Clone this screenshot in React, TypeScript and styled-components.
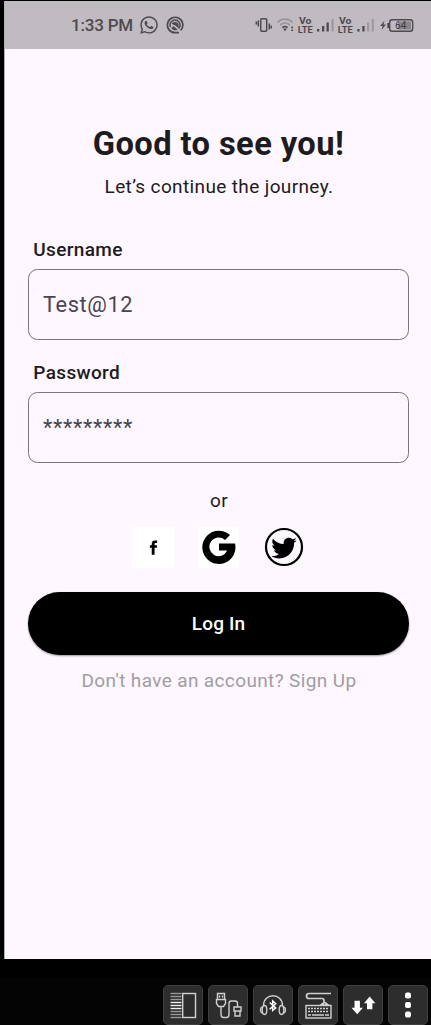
import React from "react";
import styled, { createGlobalStyle } from "styled-components";
import { FaWhatsapp, FaTwitter } from "react-icons/fa";

const GlobalStyle = createGlobalStyle`
  * { box-sizing: border-box; }
  body { margin: 0; background: #000; font-family: Roboto, sans-serif; }
`;

const Frame = styled.div`
  width: 431px;
  height: 1025px;
  display: flex;
  flex-direction: column;
  background: #000;
  overflow: hidden;
`;

const Screen = styled.main`
  margin: 1px 0 0 4px;
  height: 958px;
  background: #fef7ff;
  border-left: 1px solid #b3afb4;
  display: flex;
  flex-direction: column;
`;

const StatusBar = styled.header`
  height: 47.5px;
  flex: none;
  background: #c0bbc1;
  color: #4d4a4f;
  display: flex;
  align-items: center;
  padding: 0 17px 0 66px;
`;

const Clock = styled.span`
  font-size: 17px;
  line-height: 20px;
  font-weight: 500;
  width: 68px;
  letter-spacing: -0.2px;
  white-space: nowrap;
`;

const StatusIcons = styled.div`
  display: flex;
  align-items: center;
  gap: 7px;
`;

const SystemIcons = styled.svg`
  margin-left: auto;
  display: block;
`;

const Content = styled.section`
  display: flex;
  flex-direction: column;
  padding: 75.5px 22px 0 23px;
`;

const Title = styled.h1`
  margin: 0;
  font-size: 32.7px;
  line-height: 40px;
  font-weight: 700;
  letter-spacing: 0.4px;
  text-align: center;
  color: #1d1b20;
`;

const Subtitle = styled.p`
  margin: 11px 0 0;
  padding-left: 1px;
  font-size: 19px;
  line-height: 24px;
  letter-spacing: 0.37px;
  text-align: center;
  color: #1d1b20;
`;

const Field = styled.div<{ $top: number }>`
  margin-top: ${(p) => p.$top}px;
  display: flex;
  flex-direction: column;
`;

const Label = styled.label`
  padding-left: 5.3px;
  font-size: 19px;
  line-height: 22px;
  font-weight: 500;
  letter-spacing: 0.35px;
  color: #1d1b20;
`;

const InputBox = styled.div`
  margin-top: 8px;
  height: 71px;
  border: 1px solid #79747e;
  border-radius: 9.5px;
  display: flex;
  align-items: center;
  padding: 0 14px;
  font-size: 21.8px;
  line-height: 30px;
  letter-spacing: 0.6px;
  color: #49454f;
`;

const Or = styled.p`
  margin: 26px 0 0;
  padding-left: 1px;
  font-size: 19px;
  line-height: 24px;
  letter-spacing: 0.35px;
  text-align: center;
  color: #1d1b20;
`;

const Socials = styled.div`
  margin-top: 13.5px;
  display: flex;
  justify-content: center;
  gap: 24px;
`;

const Tile = styled.button<{ $bg: string }>`
  width: 41.5px;
  height: 41px;
  padding: 0;
  border: 0;
  color: #000;
  background: ${(p) => p.$bg};
  display: flex;
  align-items: center;
  justify-content: center;
`;

const LoginButton = styled.button`
  margin-top: 24.5px;
  height: 63px;
  border: 0;
  border-radius: 32px;
  background: #000;
  color: #fff;
  font-family: inherit;
  font-size: 19px;
  font-weight: 500;
  letter-spacing: 0.15px;
  box-shadow: 0 1px 2px rgba(0, 0, 0, 0.4);
`;

const SignUp = styled.p`
  margin: 14px 0 0;
  padding-left: 1px;
  font-size: 19px;
  line-height: 24px;
  letter-spacing: 0.37px;
  text-align: center;
  color: #a19da3;
`;

const Dock = styled.footer`
  margin-top: 19px;
  flex: 1;
  background: #040404;
  display: flex;
  justify-content: flex-end;
  gap: 5px;
  padding: 7px 3px 0 0;
`;

const DockButton = styled.button`
  width: 40px;
  height: 40px;
  padding: 0;
  border: 1px solid #3f3f3f;
  border-radius: 5px;
  background: #2d2d2d;
  display: flex;
  align-items: center;
  justify-content: center;
`;

const DockIcon = ({ children }: { children: React.ReactNode }) => (
  <svg width="38" height="38" viewBox="0 0 38 38" fill="none" stroke="#d0d0d0" strokeWidth="1.4">
    {children}
  </svg>
);

const stripes = [7.5, 10.5, 13.5, 16.5, 19.5, 22.5, 25.5, 28.5, 31.5];

export default function App() {
  return (
    <>
      <GlobalStyle />
      <Frame>
        <Screen>
          <StatusBar>
            <Clock>1:33 PM</Clock>
            <StatusIcons>
              <FaWhatsapp size={20} />
              <svg width="18" height="18" viewBox="0 0 18 18" fill="none" stroke="currentColor">
                <path d="M14.6 14.4A7.7 7.7 0 1 0 9 16.7H13" strokeWidth="1.7" />
                <path d="M4.5 11A4.9 4.9 0 1 1 12.6 12.4" strokeWidth="1.5" />
                <path d="M5.5 7.8c2-2.6 6-2.4 7.2 1l-.2 3.4-3.2-2.8z" fill="currentColor" stroke="none" />
                <path d="M5.2 11.8l2.6-1.6 3.8 3.6c-2.4 1.2-5 .4-6.4-2z" fill="currentColor" stroke="none" />
              </svg>
            </StatusIcons>
            <SystemIcons width="160" height="20" viewBox="254 15 160 20" fill="none">
              <g stroke="#4d4a4f" strokeWidth="1.5">
                <rect x="260.7" y="18.7" width="6" height="12.6" rx="1" />
                <path d="M258.3 20.5v6M256.3 21.5v3M269.3 23.5v6M271.2 25.5v3" />
              </g>
              <g strokeWidth="1.6">
                <path d="M277.5 22.3c4.5-4.2 10.5-4.2 15 0" stroke="#98949a" />
                <path d="M280 25.2c3-2.9 7-2.9 10 0" stroke="#98949a" />
                <path d="M282.4 27.7c1.6-1.5 3.6-1.5 5.2 0" stroke="#4d4a4f" />
              </g>
              <path d="M283 28.5h4l-2 2.7zM291.3 26.6h1.7v1.6h-1.7zM291.3 29.5h1.7v1.6h-1.7z" fill="#4d4a4f" />
              {[298, 338].map((x) => (
                <g key={x} fill="#4d4a4f" fontFamily="Roboto, sans-serif" fontWeight="700" textAnchor="middle">
                  <text x={x + 7.2} y="23.7" fontSize="9" textLength="12.5" lengthAdjust="spacingAndGlyphs">Vo</text>
                  <text x={x + 7.2} y="32.7" fontSize="9" textLength="15" lengthAdjust="spacingAndGlyphs">LTE</text>
                </g>
              ))}
              <path d="M317 29h2.3v2.5H317zM322 26h2.3v5.5H322zM326.5 22.5h2.3v9h-2.3zM357.3 29h2.3v2.5h-2.3zM362.3 26h2.3v5.5h-2.3z" fill="#4d4a4f" />
              <path d="M331.5 19h2.2v12.5h-2.2zM367 22.5h2.2v9H367zM371.7 19h2.2v12.5h-2.2z" fill="#9d999f" />
              <path d="M384.5 20.5l-4.3 5.5h2.5l-1.2 4 4.5-5.5h-2.5z" fill="#4d4a4f" />
              <path d="M387.3 23h1.7v5h-1.7z" fill="#4d4a4f" />
              <rect x="389.7" y="19.7" width="23" height="11.6" rx="2.5" stroke="#4d4a4f" strokeWidth="1.4" />
              <path d="M398 21.5h13v8h-13z" fill="#89858b" />
              <text x="400.7" y="29.1" textAnchor="middle" fontFamily="Roboto, sans-serif" fontSize="10" fill="#3f3c41">64</text>
            </SystemIcons>
          </StatusBar>
          <Content>
            <Title>Good to see you!</Title>
            <Subtitle>Let’s continue the journey.</Subtitle>
            <Field $top={40}>
              <Label>Username</Label>
              <InputBox>Test@12</InputBox>
            </Field>
            <Field $top={22}>
              <Label>Password</Label>
              <InputBox>*********</InputBox>
            </Field>
            <Or>or</Or>
            <Socials>
              <Tile $bg="#ffffff" aria-label="Facebook">
                <svg width="41" height="41" viewBox="0 0 42 42">
                  <path d="M19.2 28.3v-7h-1.9v-2.5h1.9v-1.5c0-2.5 1.3-3.5 3.3-3.5h2.2v2.5h-1.2c-1 0-1.4.4-1.4 1.2v1.3h2.4v2.5h-2.4v7z" />
                </svg>
              </Tile>
              <Tile $bg="#ffffff" aria-label="Google">
                <svg width="34" height="34" viewBox="0 0 34 34">
                  <path d="M28 5A16.6 16.6 0 1 0 33 13.4H17V20.6H25.2A9.3 9.3 0 1 1 23 10Z" />
                </svg>
              </Tile>
              <Tile $bg="#fbf7fc" aria-label="Twitter">
                <svg width="40" height="40" viewBox="0 0 40 40">
                  <circle cx="20" cy="20" r="18" fill="none" stroke="#000" strokeWidth="2.2" />
                  <FaTwitter x="7.2" y="8.3" size={25.5} />
                </svg>
              </Tile>
            </Socials>
            <LoginButton>Log In</LoginButton>
            <SignUp>Don't have an account? Sign Up</SignUp>
          </Content>
        </Screen>
        <Dock>
          <DockButton aria-label="Panel">
            <DockIcon>
              {stripes.map((y) => (
                <path key={y} d={`M6.5 ${y}h11`} stroke={y > 16 && y < 24 ? "#f2f2f2" : "#9a9a9a"} />
              ))}
              <rect x="18.7" y="7.5" width="12.8" height="24" />
            </DockIcon>
          </DockButton>
          <DockButton aria-label="Cable">
            <DockIcon>
              <path d="M8.5 7.5h7v6h-7zM7.5 13.5h9v4l-2 3h-5l-2-3zM12 20.5v8q0 3 2.5 3h3q2.500 0 2.500-3v-11q0-2.500 2.500-2.500h3.500q2.500 0 2.500 2.500v3.500" />
              <path d="M25 21h7v4h-7zM26 25v5h5v-5M10.5 9.5v2M13.5 9.5v2" />
            </DockIcon>
          </DockButton>
          <DockButton aria-label="Bluetooth headset">
            <DockIcon>
              <path d="M9.5 19.5C9.5 6.5 28.5 6.5 28.5 19.5" />
              <ellipse cx="10.5" cy="24" rx="2.3" ry="4.5" />
              <ellipse cx="27.5" cy="24" rx="2.3" ry="4.5" />
              <path d="M8 21c-2 1-2 5 0 6M30 21c2 1 2 5 0 6" />
              <path d="M15.700 16.500l6 5.500-3 2.500v-9.500l3 2.700-6 5.500" strokeWidth="1.5" stroke="#fff" />
            </DockIcon>
          </DockButton>
          <DockButton aria-label="Keyboard">
            <DockIcon>
              <path d="M32 7.500H10q-2.500 0-2.500 2.500t2.500 2.500h13q2 0 2 2v2l-3 2.500h7l-3-2.500" strokeWidth="1.7" />
              <rect x="7" y="19.5" width="25" height="12.5" strokeWidth="1.4" />
              <path d="M9 22.5h21M9 25.5h21" strokeDasharray="2 1" strokeWidth="1.7" />
              <path d="M9 29h3M13 29h12M26 29h4" strokeWidth="1.7" />
            </DockIcon>
          </DockButton>
          <DockButton aria-label="Transfer">
            <DockIcon>
              <path d="M10.5 14.800h5.400v7h3L13.200 28.300 7.500 21.800h3zM23 23.200v-6h-3l5.700-6.600L31.400 17.200h-3v6z" fill="#fff" stroke="none" />
            </DockIcon>
          </DockButton>
          <DockButton aria-label="More">
            <DockIcon>
              <g fill="#fff" stroke="none">
                <rect x="16" y="6.5" width="6" height="6" rx="2" />
                <rect x="16" y="16" width="6" height="6" rx="2" />
                <rect x="16" y="25.5" width="6" height="6" rx="2" />
              </g>
            </DockIcon>
          </DockButton>
        </Dock>
      </Frame>
    </>
  );
}
